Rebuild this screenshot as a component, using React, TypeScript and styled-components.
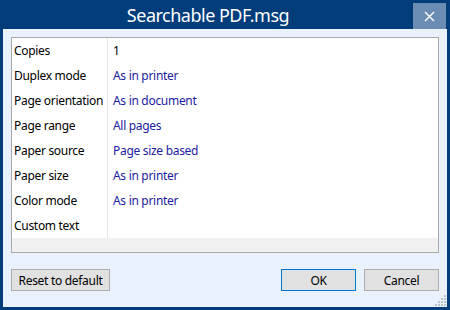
import React from "react";
import styled, { createGlobalStyle } from "styled-components";

const GlobalStyle = createGlobalStyle`
  html, body {
    margin: 0;
    padding: 0;
    width: 450px;
    height: 310px;
    overflow: hidden;
    font-family: "Noto Sans", "Open Sans", sans-serif;
  }
`;

const Frame = styled.div`
  width: 450px;
  height: 310px;
  box-sizing: border-box;
  background: #003d7a;
  display: flex;
  flex-direction: column;
  padding: 0 3px 3px;
`;

const TitleBar = styled.div`
  height: 29px;
  display: flex;
  align-items: center;
  padding-right: 34px;
`;

const Title = styled.div`
  flex: 1;
  text-align: center;
  color: #ffffff;
  font-size: 18px;
  letter-spacing: -0.5px;
`;

const CloseButton = styled.div`
  align-self: flex-end;
  width: 33px;
  height: 26px;
  margin-right: -33px;
  background: #6b8db3;
  display: flex;
  align-items: center;
  justify-content: center;
`;

const Body = styled.div`
  flex: 1;
  background: #e8f1fc;
  display: flex;
  flex-direction: column;
  padding: 8px 8px 16px;
  position: relative;
`;

const Grid = styled.div`
  border: 1px solid #a9a9a9;
  background: #f0f0f0;
  display: flex;
  flex-direction: column;
  padding-bottom: 14px;
`;

const Row = styled.div`
  display: flex;
  height: 25px;
  background: #ffffff;
  font-size: 12px;
  letter-spacing: -0.3px;
  line-height: 25px;
`;

const Label = styled.div`
  width: 96px;
  box-sizing: border-box;
  padding-left: 2px;
  border-right: 1px solid #e6e6e6;
  color: #000000;
  white-space: nowrap;
  overflow: hidden;
`;

const Value = styled.div<{ $plain?: boolean }>`
  flex: 1;
  padding-left: 5px;
  color: ${(p) => (p.$plain ? "#000000" : "#1c1ca0")};
`;

const Buttons = styled.div`
  margin-top: 16px;
  display: flex;
  align-items: center;
`;

const Button = styled.button<{ $width: number; $focused?: boolean }>`
  width: ${(p) => p.$width}px;
  height: 22px;
  box-sizing: border-box;
  background: #e1e1e1;
  border: 1px solid ${(p) => (p.$focused ? "#0078d7" : "#adadad")};
  font-family: "Noto Sans", "Open Sans", sans-serif;
  font-size: 12px;
  letter-spacing: -0.3px;
  color: #000000;
  padding: 0;
  margin-left: ${(p) => (p.$focused ? "auto" : "0")};
`;

const Spacer = styled.div`
  width: 8px;
`;

const Grip = styled.svg`
  position: absolute;
  right: 1px;
  bottom: 1px;
`;

const rows: [string, string, boolean?][] = [
  ["Copies", "1", true],
  ["Duplex mode", "As in printer"],
  ["Page orientation", "As in document"],
  ["Page range", "All pages"],
  ["Paper source", "Page size based"],
  ["Paper size", "As in printer"],
  ["Color mode", "As in printer"],
  ["Custom text", ""],
];

const gripDots = [
  [10, 1],
  [7, 4],
  [10, 4],
  [4, 7],
  [7, 7],
  [10, 7],
  [1, 10],
  [4, 10],
  [7, 10],
  [10, 10],
];

export default function App() {
  return (
    <>
      <GlobalStyle />
      <Frame>
        <TitleBar>
          <Title>Searchable PDF.msg</Title>
          <CloseButton>
            <svg width="11" height="11" viewBox="0 0 11 11">
              <path d="M1 1L10 10M10 1L1 10" stroke="#ffffff" strokeWidth="1.4" />
            </svg>
          </CloseButton>
        </TitleBar>
        <Body>
          <Grid>
            {rows.map(([label, value, plain]) => (
              <Row key={label}>
                <Label>{label}</Label>
                <Value $plain={plain}>{value}</Value>
              </Row>
            ))}
          </Grid>
          <Buttons>
            <Button $width={99}>Reset to default</Button>
            <Button $width={75} $focused>
              OK
            </Button>
            <Spacer />
            <Button $width={75}>Cancel</Button>
          </Buttons>
          <Grip width="12" height="12" viewBox="0 0 12 12">
            {gripDots.map(([x, y]) => (
              <rect key={`${x}-${y}`} x={x} y={y} width="2" height="2" fill="#b8c4d0" />
            ))}
          </Grip>
        </Body>
      </Frame>
    </>
  );
}
